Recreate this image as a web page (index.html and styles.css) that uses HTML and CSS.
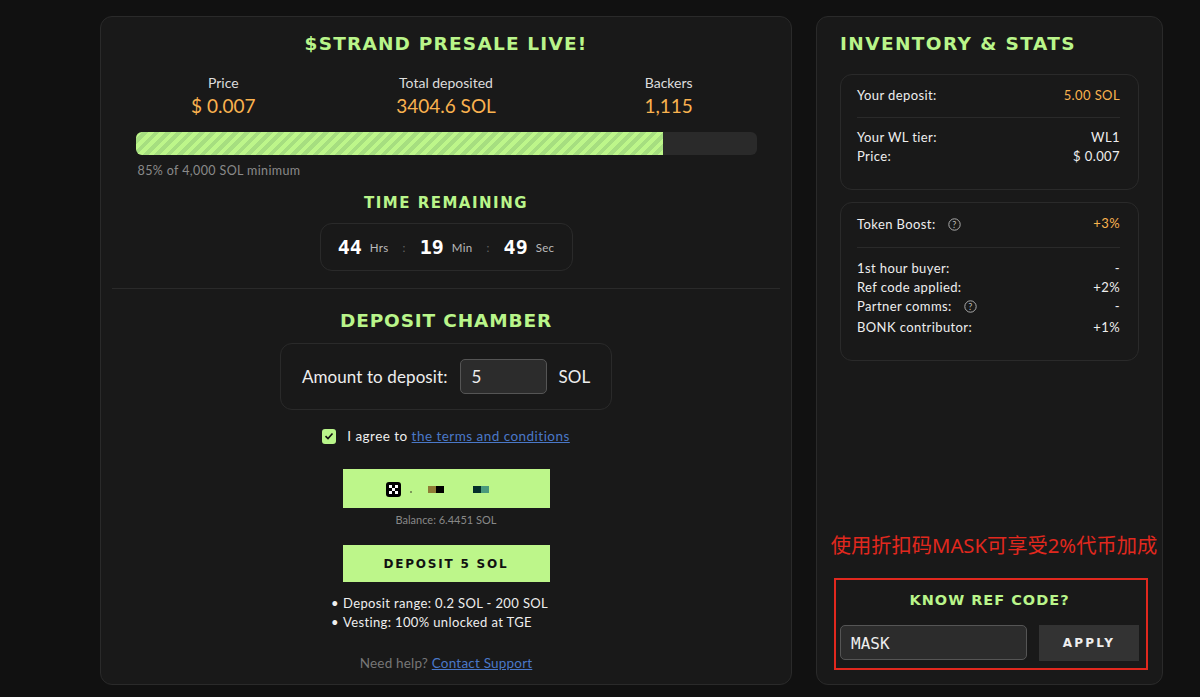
FILE: index.html
```html
<!DOCTYPE html>
<html>
<head>
	<title>strand presale</title>
	<link rel="stylesheet" href="styles.css">
</head>
<body>
<div class="page">
	<div class="panel panel-main">
		<h1 class="title">$STRAND PRESALE LIVE!</h1>
		<ul class="stats">
			<li><p class="stat-label">Price</p><p class="stat-value">$ 0.007</p></li>
			<li><p class="stat-label">Total deposited</p><p class="stat-value">3404.6 SOL</p></li>
			<li><p class="stat-label">Backers</p><p class="stat-value">1,115</p></li>
		</ul>
		<div class="progress"><div class="progress-fill"></div></div>
		<p class="progress-note">85% of 4,000 SOL minimum</p>
		<h2 class="time-title">TIME REMAINING</h2>
		<div class="timer">
			<b>44</b><span>Hrs</span><i>:</i>
			<b>19</b><span>Min</span><i>:</i>
			<b>49</b><span>Sec</span>
		</div>
		<div class="divider"></div>
		<h2 class="deposit-title">DEPOSIT CHAMBER</h2>
		<div class="amount">
			<span>Amount to deposit:</span>
			<div class="amount-input">5</div>
			<span>SOL</span>
		</div>
		<div class="agree">
			<span class="checkbox">
				<svg width="10" height="10" viewBox="0 0 10 10"><path d="M1.5 5.2 4 7.6 8.5 2.4" fill="none" stroke="#111" stroke-width="1.6"/></svg>
			</span>
			<span>I agree to <a href="#">the terms and conditions</a></span>
		</div>
		<div class="wallet">
			<svg class="wallet-icon" width="15" height="15" viewBox="0 0 15 15">
				<rect width="15" height="15" rx="3" fill="#000"/>
				<rect x="3" y="3" width="3" height="3" fill="#fff"/>
				<rect x="9" y="3" width="3" height="3" fill="#fff"/>
				<rect x="6" y="6" width="3" height="3" fill="#fff"/>
				<rect x="3" y="9" width="3" height="3" fill="#fff"/>
				<rect x="9" y="9" width="3" height="3" fill="#fff"/>
			</svg>
			<span class="wallet-dot"></span>
			<span class="pix pix-a"></span>
			<span class="pix pix-b"></span>
		</div>
		<p class="balance">Balance: 6.4451 SOL</p>
		<button class="deposit-btn">DEPOSIT 5 SOL</button>
		<ul class="notes">
			<li>Deposit range: 0.2 SOL - 200 SOL</li>
			<li>Vesting: 100% unlocked at TGE</li>
		</ul>
		<p class="help">Need help? <a href="#">Contact Support</a></p>
	</div>

	<div class="panel panel-side">
		<h2 class="side-title">INVENTORY &amp; STATS</h2>
		<div class="box box-deposit">
			<div class="row row-head"><span>Your deposit:</span><span class="orange">5.00 SOL</span></div>
			<div class="box-line"></div>
			<div class="row"><span>Your WL tier:</span><span>WL1</span></div>
			<div class="row"><span>Price:</span><span>$ 0.007</span></div>
		</div>
		<div class="box box-boost">
			<div class="row row-head">
				<span class="with-help">Token Boost:
					<svg width="13" height="13" viewBox="0 0 13 13"><circle cx="6.5" cy="6.5" r="5.7" fill="none" stroke="#aaa"/><text x="6.5" y="9.6" text-anchor="middle" font-size="9" fill="#bbb">?</text></svg>
				</span>
				<span class="orange">+3%</span>
			</div>
			<div class="box-line box-line-wide"></div>
			<div class="row"><span>1st hour buyer:</span><span>-</span></div>
			<div class="row"><span>Ref code applied:</span><span>+2%</span></div>
			<div class="row">
				<span class="with-help">Partner comms:
					<svg width="13" height="13" viewBox="0 0 13 13"><circle cx="6.5" cy="6.5" r="5.7" fill="none" stroke="#aaa"/><text x="6.5" y="9.6" text-anchor="middle" font-size="9" fill="#bbb">?</text></svg>
				</span>
				<span>-</span>
			</div>
			<div class="row row-last"><span>BONK contributor:</span><span>+1%</span></div>
		</div>
		<div class="ref">
			<p class="promo">使用折扣码MASK可享受2%代币加成</p>
			<div class="promo-frame"></div>
			<h3 class="ref-title">KNOW REF CODE?</h3>
			<div class="ref-form">
				<div class="ref-input">MASK</div>
				<button class="ref-btn">APPLY</button>
			</div>
		</div>
	</div>
</div>
</body>
</html>
```

FILE: styles.css
```css
*{
	margin: 0;
	padding: 0;
	list-style: none;
	box-sizing: border-box;
}
body{
	background: #111;
	color: #eee;
	font-family: "Lato", "Noto Sans CJK SC", sans-serif;
	font-size: 13px;
}
.page{
	display: flex;
	gap: 24px;
	padding: 16px 37px 12px 100px;
	height: 697px;
}
.panel{
	background: #191919;
	border: 1px solid #2a2a2a;
	border-radius: 12px;
}
.panel-main{
	width: 692px;
	padding: 0 11px;
	display: flex;
	flex-direction: column;
	align-items: center;
}
.panel-side{
	width: 347px;
	padding: 0 23px;
	display: flex;
	flex-direction: column;
}
h1, h2, h3{
	font-family: "DejaVu Sans", sans-serif;
	font-weight: bold;
	color: #b9f58a;
}
.title{
	font-size: 18.5px;
	letter-spacing: 1.2px;
	line-height: 28px;
	margin-top: 13px;
}
.stats{
	width: 100%;
	display: grid;
	grid-template-columns: repeat(3, 1fr);
	margin-top: 16px;
	text-align: center;
}
.stat-label{
	font-size: 14px;
	line-height: 18px;
	color: #ddd;
}
.stat-value{
	font-size: 19px;
	line-height: 26px;
	margin-top: 1px;
	color: #f9b24f;
}
.progress{
	width: 621px;
	height: 23px;
	margin-top: 13px;
	background: #2a2a2a;
	border-radius: 6px;
	overflow: hidden;
}
.progress-fill{
	width: 85%;
	height: 100%;
	background: repeating-linear-gradient(-45deg, #bdf68a 0, #bdf68a 4px, #a6de80 4px, #a6de80 8px);
}
.progress-note{
	width: 621px;
	padding-left: 2px;
	margin-top: 8px;
	line-height: 16px;
	font-size: 12.5px;
	letter-spacing: 0.38px;
	color: #8a8a8a;
}
.time-title{
	font-size: 15px;
	letter-spacing: 1.5px;
	line-height: 20px;
	margin-top: 14px;
}
.timer{
	width: 253px;
	height: 48px;
	margin-top: 10px;
	border: 1px solid #2a2a2a;
	border-radius: 12px;
	display: flex;
	align-items: center;
	justify-content: center;
	font-size: 11.5px;
	letter-spacing: 0.3px;
	color: #bbb;
}
.timer b{
	font-family: "DejaVu Sans Mono", monospace;
	font-size: 20px;
	letter-spacing: 0;
	color: #fff;
	margin-right: 8px;
}
.timer i{
	font-style: normal;
	color: #666;
	margin: 0 14px;
}
.divider{
	width: 100%;
	height: 1px;
	background: #2a2a2a;
	margin-top: 17px;
}
.deposit-title{
	font-size: 18.5px;
	letter-spacing: 0.85px;
	line-height: 24px;
	margin-top: 20px;
}
.amount{
	width: 332px;
	height: 67px;
	margin-top: 10px;
	border: 1px solid #2a2a2a;
	border-radius: 12px;
	display: flex;
	align-items: center;
	justify-content: center;
	gap: 12px;
	font-size: 17px;
	color: #eee;
}
.amount-input{
	width: 87px;
	height: 35px;
	line-height: 33px;
	padding-left: 11px;
	background: #2c2c2c;
	border: 1px solid #555;
	border-radius: 5px;
}
.amount span:first-child{
	letter-spacing: 0.1px;
}
.agree{
	display: flex;
	align-items: center;
	gap: 11px;
	margin-top: 18px;
	line-height: 16px;
	font-size: 13.5px;
	letter-spacing: 0.47px;
}
.checkbox{
	width: 14px;
	height: 15px;
	background: #b9f58a;
	border-radius: 3px;
	display: flex;
	align-items: center;
	justify-content: center;
}
a{
	color: #4a78c8;
}
.wallet{
	width: 207px;
	height: 39px;
	margin-top: 25px;
	background: #bdf68a;
	display: flex;
	align-items: center;
	padding: 1px 0 0 43px;
}
.wallet-dot{
	width: 2px;
	height: 2px;
	margin: 5px 0 0 9px;
	background: #7d9a5a;
}
.pix{
	display: block;
	width: 16px;
	height: 7px;
}
.pix-a{
	margin-left: 16px;
	background: linear-gradient(90deg, #8f7c35 50%, #000 50%);
}
.pix-b{
	margin-left: 29px;
	background: linear-gradient(90deg, #04302b 50%, #4a9a7c 50%);
}
.balance{
	font-size: 11px;
	line-height: 14px;
	margin-top: 5px;
	color: #888;
}
.deposit-btn{
	width: 207px;
	height: 37px;
	margin-top: 18px;
	border: none;
	background: #bdf68a;
	color: #111;
	font-family: "DejaVu Sans", sans-serif;
	font-weight: bold;
	font-size: 12px;
	letter-spacing: 1.8px;
}
.notes{
	width: 226px;
	margin-top: 12px;
	font-size: 13px;
	letter-spacing: 0.37px;
	line-height: 19px;
}
.notes li{
	white-space: nowrap;
}
.notes li:before{
	content: "•";
	display: inline-block;
	width: 12px;
	margin-left: -2px;
}
.help{
	margin-top: 22px;
	line-height: 18px;
	font-size: 13.5px;
	letter-spacing: 0.2px;
	color: #777;
}
.side-title{
	font-size: 18.5px;
	letter-spacing: 1.4px;
	line-height: 28px;
	margin-top: 13px;
}
.box{
	border: 1px solid #2a2a2a;
	border-radius: 12px;
	padding: 0 18px 0 16px;
}
.box-deposit{
	height: 116px;
	margin-top: 16px;
	padding-top: 11px;
}
.box-boost{
	height: 159px;
	margin-top: 12px;
	padding-top: 11px;
}
.row{
	display: flex;
	justify-content: space-between;
	line-height: 19px;
	height: 19px;
	font-size: 13px;
	letter-spacing: 0.4px;
	color: #eee;
}
.row-head{
	height: 20px;
}
.row-last{
	margin-top: 2px;
}
.orange{
	color: #f9b24f;
}
.with-help{
	display: flex;
	align-items: center;
	gap: 12px;
}
.box-line{
	height: 1px;
	background: #2a2a2a;
	margin: 11px 0 10px;
}
.box-line-wide{
	margin: 13px 0 11px;
}
.ref{
	position: relative;
	margin-top: auto;
	padding-bottom: 23px;
	text-align: center;
}
.promo{
	position: absolute;
	left: -11px;
	top: -59px;
	width: 330px;
	white-space: nowrap;
	font-family: "Noto Sans", "Noto Sans CJK SC", sans-serif;
	font-size: 20.25px;
	line-height: 28px;
	color: #e1281e;
}
.promo-frame{
	position: absolute;
	left: -6px;
	top: -12px;
	width: 314px;
	height: 92px;
	border: 2px solid #e1281e;
}
.ref-title{
	font-size: 14.5px;
	letter-spacing: 1px;
	line-height: 20px;
}
.ref-form{
	display: flex;
	gap: 12px;
	margin-top: 15px;
}
.ref-input{
	width: 187px;
	height: 35px;
	line-height: 35px;
	padding-left: 10px;
	text-align: left;
	background: #2c2c2c;
	border: 1px solid #555;
	border-radius: 5px;
	font-family: "DejaVu Sans Mono", monospace;
	font-size: 16px;
}
.ref-btn{
	width: 100px;
	height: 36px;
	border: none;
	background: #333;
	color: #eee;
	font-family: "DejaVu Sans", sans-serif;
	font-weight: bold;
	font-size: 12px;
	letter-spacing: 2.2px;
}
```
